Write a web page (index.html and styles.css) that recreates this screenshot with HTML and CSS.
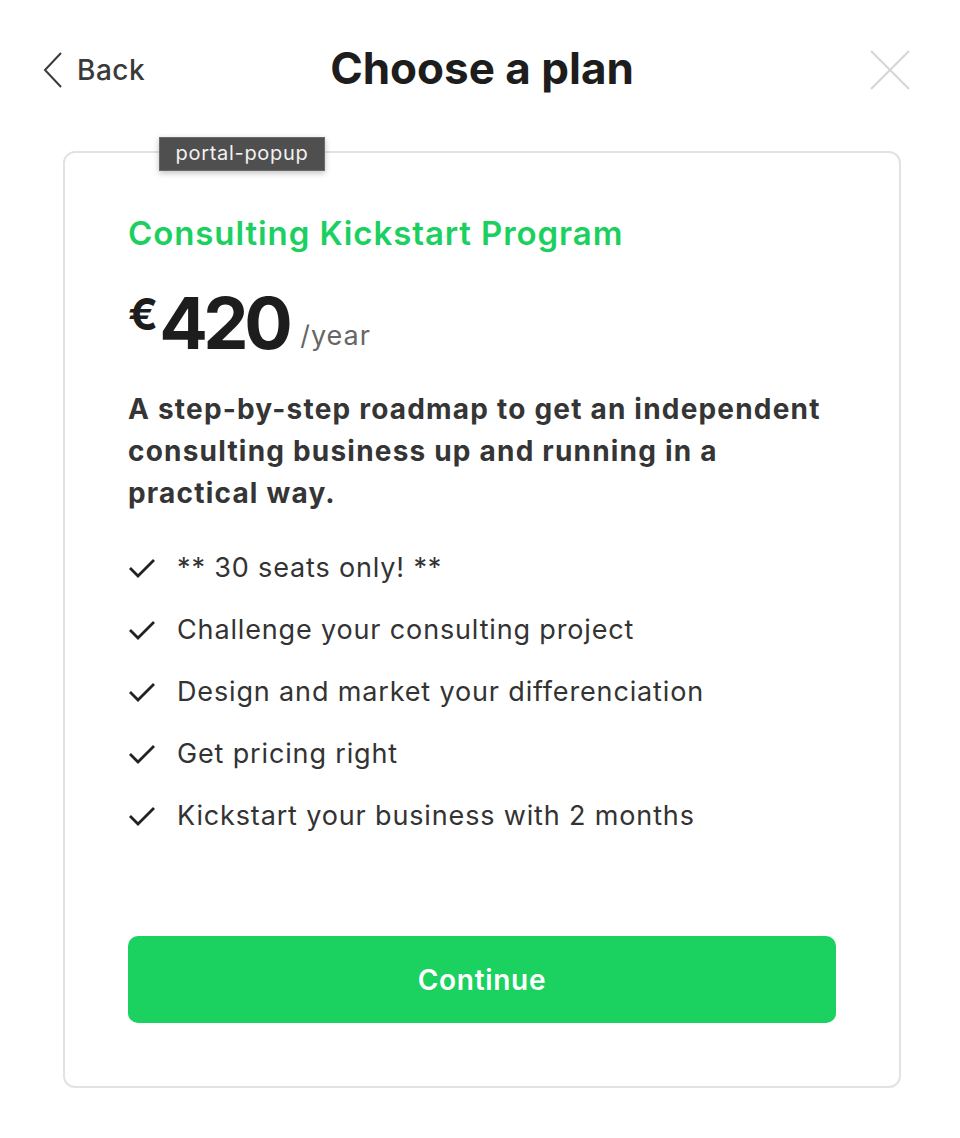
FILE: index.html
```html
<!DOCTYPE html>
<html>
<head>
<meta charset="utf-8">
<link rel="stylesheet" href="styles.css">
</head>
<body>
<div class="page">
  <header class="top">
    <a class="back">
      <svg class="chev" width="20" height="36" viewBox="0 0 20 36"><path d="M18 1 L2 18 L18 35" fill="none" stroke="#3a3a3a" stroke-width="2"/></svg>
      <span>Back</span>
    </a>
    <h1 class="title">Choose a plan</h1>
    <svg class="close" width="42" height="42" viewBox="0 0 42 42"><path d="M2 2 L40 40 M40 2 L2 40" stroke="#d6d6d6" stroke-width="2" fill="none"/></svg>
  </header>
  <div class="card">
    <div class="tip">portal-popup</div>
    <h2 class="name">Consulting Kickstart Program</h2>
    <div class="price"><span class="cur">€</span><span class="amt">420</span><span class="per">/year</span></div>
    <p class="desc">A step-by-step roadmap to get an independent consulting business up and running in a practical way.</p>
    <ul class="feats">
      <li><svg class="chk" width="28" height="22" viewBox="0 0 28 22"><path d="M2 11 L10 19 L26 3" fill="none" stroke="#222" stroke-width="2.8"/></svg><span>** 30 seats only! **</span></li>
      <li><svg class="chk" width="28" height="22" viewBox="0 0 28 22"><path d="M2 11 L10 19 L26 3" fill="none" stroke="#222" stroke-width="2.8"/></svg><span>Challenge your consulting project</span></li>
      <li><svg class="chk" width="28" height="22" viewBox="0 0 28 22"><path d="M2 11 L10 19 L26 3" fill="none" stroke="#222" stroke-width="2.8"/></svg><span>Design and market your differenciation</span></li>
      <li><svg class="chk" width="28" height="22" viewBox="0 0 28 22"><path d="M2 11 L10 19 L26 3" fill="none" stroke="#222" stroke-width="2.8"/></svg><span>Get pricing right</span></li>
      <li><svg class="chk" width="28" height="22" viewBox="0 0 28 22"><path d="M2 11 L10 19 L26 3" fill="none" stroke="#222" stroke-width="2.8"/></svg><span>Kickstart your business with 2 months</span></li>
    </ul>
    <button class="cta">Continue</button>
  </div>
</div>
</body>
</html>
```
FILE: styles.css
```css
* { box-sizing: border-box; }
html, body { margin: 0; padding: 0; background: #fff; }
body { font-family: Inter, "Noto Sans", sans-serif; color: #222; width: 960px; height: 1138px; overflow: hidden; }
.page { padding: 0 59px 0 63px; }
.top { position: relative; height: 151px; display: flex; align-items: flex-start; justify-content: center; }
.back { position: absolute; left: -20px; top: 52px; display: flex; align-items: center; gap: 14px; color: #3a3a3a; font-size: 28px; font-weight: 500; letter-spacing: 0.5px; }
.back span { line-height: 36px; }
.title { margin: 38px 0 0; font-size: 44px; font-weight: 700; letter-spacing: 0; color: #1d1d1d; line-height: 60px; }
.close { position: absolute; right: -10px; top: 49px; }
.card { position: relative; border: 2px solid #e2e2e2; border-radius: 12px; height: 937px; width: 838px; padding: 60px 63px 63px; display: flex; flex-direction: column; }
.tip { position: absolute; left: 94px; top: -16px; width: 166px; height: 34px; background: #4f4f4f; border: 1px solid #6a6a6a; color: #f2f2f2; font-size: 20px; line-height: 31px; text-align: center; box-shadow: 0 2px 6px rgba(0,0,0,0.25); letter-spacing: 0.7px; }
.name { margin: 0; font-size: 33px; font-weight: 600; color: #1bd05f; line-height: 40px; letter-spacing: 0.9px; }
.price { display: flex; align-items: flex-start; margin-top: 30px; height: 80px; }
.cur { font-size: 44px; font-weight: 700; line-height: 50px; color: #1d1d1d; margin-top: 6px; margin-right: 1px; }
.amt { font-size: 72px; font-weight: 700; line-height: 80px; color: #1d1d1d; letter-spacing: -4.5px; }
.per { font-size: 27px; color: #666; line-height: 30px; margin-top: 38px; margin-left: 12px; letter-spacing: 1px; }
.desc { margin: 25px 0 0; font-size: 28px; font-weight: 700; line-height: 42px; color: #353535; letter-spacing: 1.2px; }
.feats { list-style: none; margin: 36px 0 0; padding: 0; display: flex; flex-direction: column; gap: 26px; }
.feats li { display: flex; align-items: center; gap: 21px; font-size: 27px; line-height: 36px; color: #333; letter-spacing: 0.85px; }
.chk { flex: none; }
.cta { margin-top: auto; height: 87px; width: 100%; border: 0; border-radius: 10px; background: #1bd15f; color: #fff; font-family: Inter, sans-serif; font-size: 28px; font-weight: 600; letter-spacing: 0.7px; }
```
